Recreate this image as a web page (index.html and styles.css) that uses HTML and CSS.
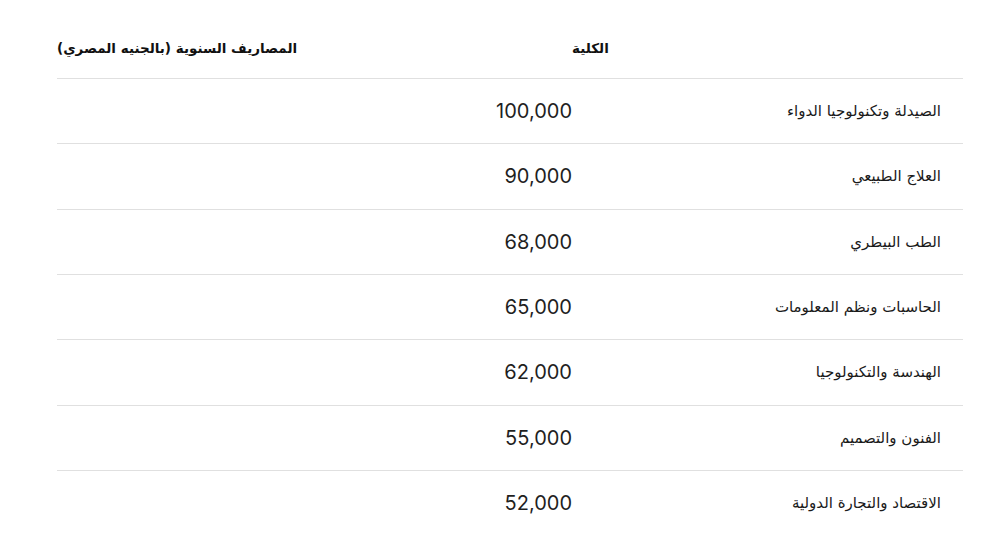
FILE: index.html
```html
<!DOCTYPE html>
<html lang="ar">
<head>
<meta charset="utf-8">
<title>المصاريف السنوية</title>
<link rel="stylesheet" href="styles.css">
</head>
<body>
<table class="fees" dir="rtl">
  <thead>
    <tr>
      <th class="col-college">الكلية</th>
      <th class="col-fee">المصاريف السنوية (بالجنيه المصري)</th>
    </tr>
  </thead>
  <tbody>
    <tr><td class="col-college">الصيدلة وتكنولوجيا الدواء</td><td class="col-fee">100,000</td></tr>
    <tr><td class="col-college">العلاج الطبيعي</td><td class="col-fee">90,000</td></tr>
    <tr><td class="col-college">الطب البيطري</td><td class="col-fee">68,000</td></tr>
    <tr><td class="col-college">الحاسبات ونظم المعلومات</td><td class="col-fee">65,000</td></tr>
    <tr><td class="col-college">الهندسة والتكنولوجيا</td><td class="col-fee">62,000</td></tr>
    <tr><td class="col-college">الفنون والتصميم</td><td class="col-fee">55,000</td></tr>
    <tr><td class="col-college">الاقتصاد والتجارة الدولية</td><td class="col-fee">52,000</td></tr>
  </tbody>
</table>
</body>
</html>
```
FILE: styles.css
```css
html, body {
  margin: 0;
  padding: 0;
  background: #ffffff;
}

body {
  padding-left: 57px;
  font-family: "DejaVu Sans", "Noto Sans", sans-serif;
  color: #1f1f1f;
}

.fees {
  width: 906px;
  border-collapse: collapse;
  table-layout: fixed;
}

.fees th {
  height: 60px;
  padding: 18px 0 0 0;
  text-align: left;
  vertical-align: middle;
  font-size: 13.5px;
  font-weight: bold;
  color: #111111;
  border-bottom: 1px solid #e0e0e0;
}

.fees th.col-college {
  width: 391px;
}

.fees td {
  height: 64.33px;
  padding: 0;
  vertical-align: middle;
  border-bottom: 1px solid #e0e0e0;
}

.fees tbody tr:last-child td {
  border-bottom: none;
}

.fees td.col-college {
  text-align: right;
  padding-right: 22px;
  font-size: 15px;
  color: #1a1a1a;
}

.fees td.col-fee {
  text-align: right;
  padding-right: 0;
  font-family: "Inter", "Roboto", sans-serif;
  font-size: 20px;
  color: #1f1f1f;
}
```
